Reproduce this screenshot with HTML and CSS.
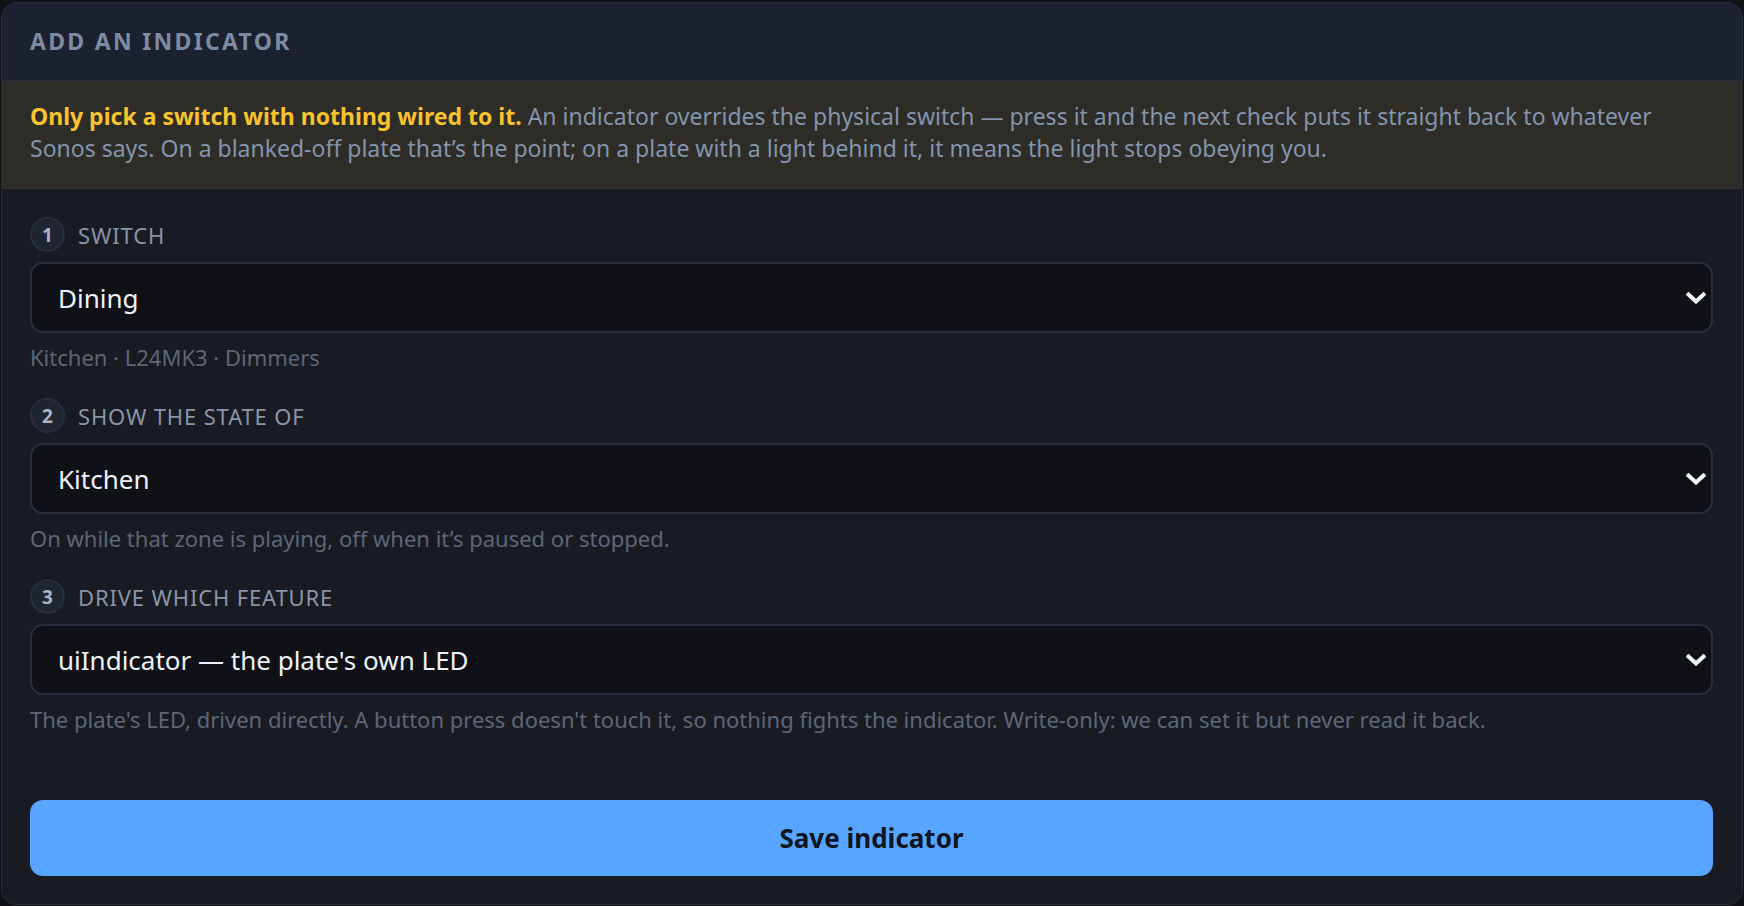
FILE: index.html
```html
<!DOCTYPE html>
<html lang="en">
<head>
<meta charset="utf-8">
<title>Add an indicator</title>
<link rel="stylesheet" href="styles.css">
</head>
<body>
<section class="card">
  <header class="card-head">
    <h2 class="card-title">Add an indicator</h2>
  </header>
  <div class="warning">
    <p><strong>Only pick a switch with nothing wired to it.</strong> An indicator overrides the physical switch — press it and the next check puts it straight back to whatever Sonos says. On a blanked-off plate that’s the point; on a plate with a light behind it, it means the light stops obeying you.</p>
  </div>
  <form class="card-body">
    <div class="field">
      <label class="field-label" for="sw"><span class="step">1</span>Switch</label>
      <div class="select-wrap">
        <select id="sw" class="select">
          <option>Dining</option>
        </select>
        <svg class="chevron" viewBox="0 0 20 12" aria-hidden="true"><path d="M2.5 2.5 L10 9.5 L17.5 2.5"/></svg>
      </div>
      <p class="hint">Kitchen · L24MK3 · Dimmers</p>
    </div>
    <div class="field">
      <label class="field-label" for="zone"><span class="step">2</span>Show the state of</label>
      <div class="select-wrap">
        <select id="zone" class="select">
          <option>Kitchen</option>
        </select>
        <svg class="chevron" viewBox="0 0 20 12" aria-hidden="true"><path d="M2.5 2.5 L10 9.5 L17.5 2.5"/></svg>
      </div>
      <p class="hint">On while that zone is playing, off when it’s paused or stopped.</p>
    </div>
    <div class="field">
      <label class="field-label" for="feat"><span class="step">3</span>Drive which feature</label>
      <div class="select-wrap">
        <select id="feat" class="select">
          <option>uiIndicator — the plate's own LED</option>
        </select>
        <svg class="chevron" viewBox="0 0 20 12" aria-hidden="true"><path d="M2.5 2.5 L10 9.5 L17.5 2.5"/></svg>
      </div>
      <p class="hint">The plate's LED, driven directly. A button press doesn't touch it, so nothing fights the indicator. Write-only: we can set it but never read it back.</p>
    </div>
    <button type="button" class="save">Save indicator</button>
  </form>
</section>
</body>
</html>
```
FILE: styles.css
```css
* {
  box-sizing: border-box;
}

html,
body {
  margin: 0;
  padding: 0;
  background: #0f1115;
}

body {
  font-family: "Noto Sans", "Open Sans", "DejaVu Sans", sans-serif;
  font-size: 22px;
  color: #c8d0dc;
  padding: 2px 1px 1px 1px;
}

.card {
  background: #181b22;
  border: 1px solid #262b36;
  border-radius: 15px;
  overflow: hidden;
  height: 903px;
  display: flex;
  flex-direction: column;
}

.card-head {
  background: #1c2130;
  padding: 23px 28px 24px;
  border-bottom: 1px solid #2a3040;
}

.card-title {
  margin: 0;
  font-size: 23px;
  line-height: 30px;
  font-weight: 700;
  letter-spacing: 2.3px;
  text-transform: uppercase;
  color: #7d8aa3;
}

.warning {
  background: #2d2c26;
  border-bottom: 1px solid #2a3040;
  padding: 19px 28px 24px;
}

.warning p {
  margin: 0;
  font-size: 23px;
  line-height: 32px;
  color: #8394ae;
}

.warning strong {
  color: #f9c22e;
  font-weight: 700;
}

.card-body {
  flex: 1;
  display: flex;
  flex-direction: column;
  padding: 28px 29px 28px 28px;
}

.field {
  display: flex;
  flex-direction: column;
  margin-bottom: 25px;
}

.field-label {
  display: flex;
  align-items: center;
  gap: 13px;
  height: 35px;
  font-size: 22px;
  letter-spacing: 0.85px;
  text-transform: uppercase;
  color: #8a95a7;
}

.step {
  width: 35px;
  height: 35px;
  flex: none;
  display: flex;
  align-items: center;
  justify-content: center;
  border-radius: 50%;
  background: #1f2431;
  border: 2px solid #272d3b;
  font-size: 19px;
  font-weight: 700;
  letter-spacing: 0;
  color: #a8b3c4;
}

.select-wrap {
  position: relative;
  margin-top: 10px;
}

.select {
  display: block;
  width: 100%;
  height: 71px;
  margin: 0;
  padding: 0 60px 0 26px;
  appearance: none;
  -webkit-appearance: none;
  background: #0f1116;
  border: 2px solid #292f3c;
  border-radius: 13px;
  font-family: inherit;
  font-size: 26px;
  color: #eef2f8;
  outline: none;
}

.chevron {
  position: absolute;
  right: 7px;
  top: 50%;
  width: 20px;
  height: 12px;
  margin-top: -6px;
  fill: none;
  stroke: #f1f4f8;
  stroke-width: 4;
  stroke-linecap: square;
  pointer-events: none;
}

.hint {
  margin: 8px 0 0;
  line-height: 32px;
  color: #5e6676;
}

.save {
  margin-top: auto;
  height: 76px;
  width: 100%;
  border: 0;
  border-radius: 13px;
  background: #57a5ff;
  color: #0d1524;
  font-family: inherit;
  font-size: 26px;
  font-weight: 700;
  cursor: pointer;
}
```
